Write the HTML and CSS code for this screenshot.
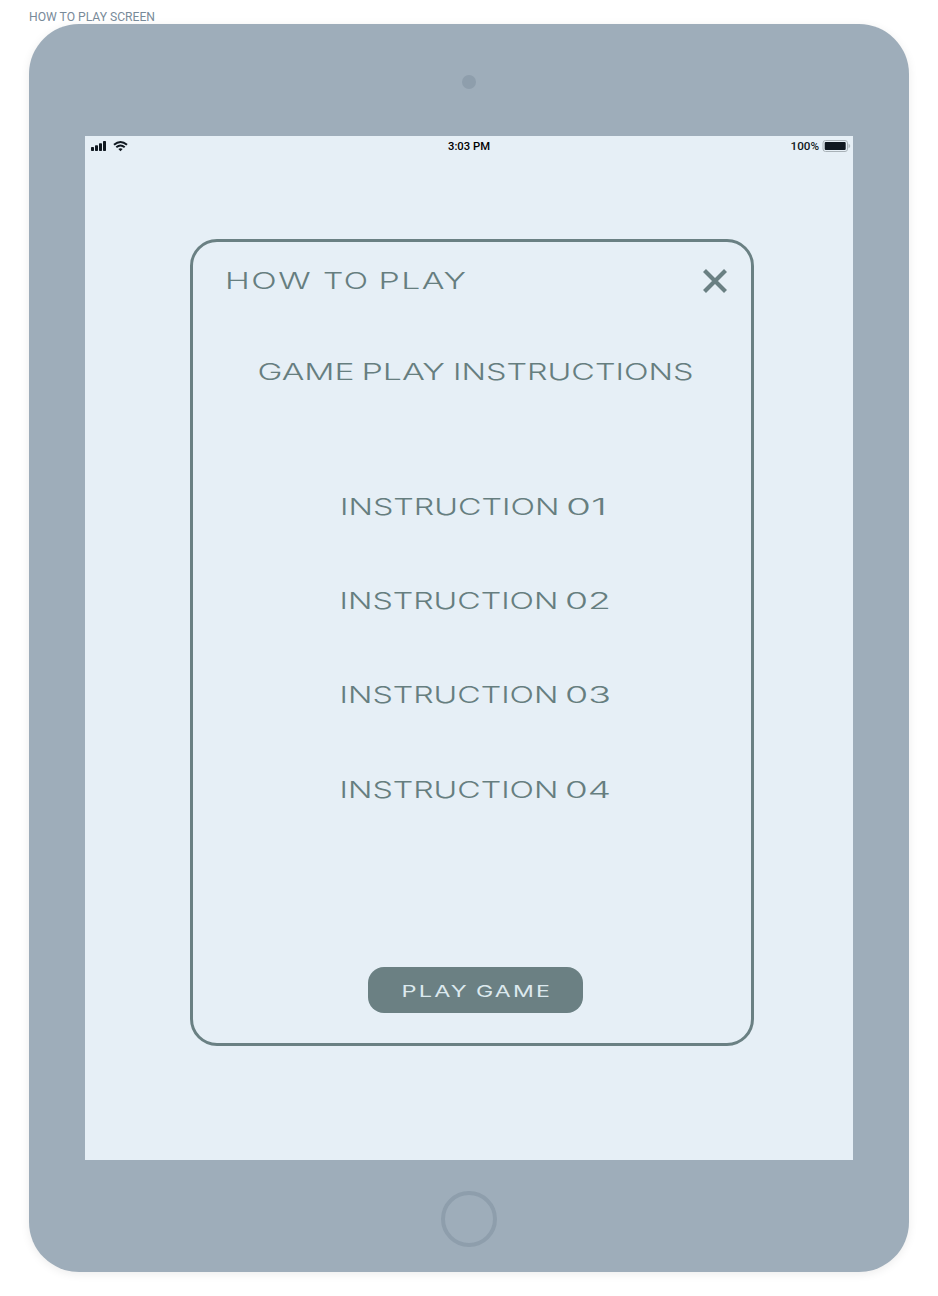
FILE: index.html
```html
<!DOCTYPE html>
<html lang="en">
<head>
<meta charset="utf-8">
<title>How to Play Screen</title>
<link rel="stylesheet" href="styles.css">
</head>
<body>
<svg class="caption" viewBox="0 0 140 24"><text x="0" y="21" textLength="126" lengthAdjust="spacingAndGlyphs">HOW TO PLAY SCREEN</text></svg>
<main class="tablet">
  <div class="camera"></div>
  <section class="screen">
    <header class="status">
      <svg class="signals" viewBox="0 0 50 20">
        <rect x="6" y="11" width="3" height="4" rx=".7"/><rect x="10" y="9.3" width="3" height="5.7" rx=".7"/><rect x="14" y="7.3" width="3" height="7.7" rx=".7"/><rect x="18" y="5" width="3" height="10" rx=".7"/>
        <path class="wave" d="M29 8.8Q35.5 3.2 42 8.8M31.3 11.3Q35.5 7.7 39.7 11.3"/>
        <path d="M33.4 13.1Q35.5 11.5 37.6 13.1L35.5 15.3Z"/>
      </svg>
      <svg class="clock" viewBox="0 0 50 20"><text x="4" y="14.2" textLength="42" lengthAdjust="spacingAndGlyphs">3:03 PM</text></svg>
      <svg class="power" viewBox="0 0 70 20">
        <text x="7.5" y="14.2" textLength="28.5" lengthAdjust="spacingAndGlyphs">100%</text>
        <rect class="shell" x="40" y="4.5" width="24.5" height="11" rx="2.5"/>
        <rect x="41.7" y="6" width="21" height="8" rx="1"/>
        <path class="tip" d="M65.500 7.500Q69 10 65.500 12.500Z"/>
      </svg>
    </header>
    <article class="card">
      <div class="head">
        <svg class="title" viewBox="0 0 300 40">
          <text x="32" y="26.7" textLength="87" lengthAdjust="spacingAndGlyphs">HOW</text>
          <text x="130" y="26.7" textLength="46.5" lengthAdjust="spacingAndGlyphs">TO</text>
          <text x="185.500" y="26.7" textLength="89" lengthAdjust="spacingAndGlyphs">PLAY</text>
        </svg>
        <svg class="close" viewBox="0 0 30 30"><path d="M4.500 4.500L25.500 25.500M25.500 4.500L4.500 25.500"/></svg>
      </div>
      <svg class="line intro" viewBox="0 0 558 40">
        <text x="64.500" y="28" textLength="97" lengthAdjust="spacingAndGlyphs">GAME</text>
        <text x="168.500" y="28" textLength="83.500" lengthAdjust="spacingAndGlyphs">PLAY</text>
        <text x="260" y="28" textLength="240.500" lengthAdjust="spacingAndGlyphs">INSTRUCTIONS</text>
      </svg>
      <div class="steps">
        <svg class="line" viewBox="0 0 558 40"><text x="147" y="27.9" textLength="219.500" lengthAdjust="spacingAndGlyphs">INSTRUCTION</text><text x="373" y="27.9" textLength="41" lengthAdjust="spacingAndGlyphs">01</text></svg>
        <svg class="line" viewBox="0 0 558 40"><text x="146.500" y="27.9" textLength="219" lengthAdjust="spacingAndGlyphs">INSTRUCTION</text><text x="372" y="27.9" textLength="46" lengthAdjust="spacingAndGlyphs">02</text></svg>
        <svg class="line" viewBox="0 0 558 40"><text x="146.500" y="27.9" textLength="219" lengthAdjust="spacingAndGlyphs">INSTRUCTION</text><text x="372" y="27.9" textLength="46" lengthAdjust="spacingAndGlyphs">03</text></svg>
        <svg class="line" viewBox="0 0 558 40"><text x="146.500" y="28.3" textLength="219" lengthAdjust="spacingAndGlyphs">INSTRUCTION</text><text x="372" y="28.3" textLength="46" lengthAdjust="spacingAndGlyphs">04</text></svg>
      </div>
      <button class="play"><svg viewBox="0 0 215 46">
        <text x="33.500" y="30.200" textLength="67.500" lengthAdjust="spacingAndGlyphs">PLAY</text>
        <text x="108" y="30.200" textLength="76" lengthAdjust="spacingAndGlyphs">GAME</text>
      </svg></button>
    </article>
  </section>
  <div class="home"></div>
</main>
</body>
</html>
```
FILE: styles.css
```css
* { box-sizing: border-box; }
body { margin: 0; background: #fff; height: 1296px; overflow: hidden; }
svg { display: block; }
.caption { width: 140px; height: 24px; margin-left: 29px; fill: #788a99; font: 400 12.3px Roboto, sans-serif; }
.tablet { width: 880px; height: 1248px; margin-left: 29px; border-radius: 50px; background: #9eadba; box-shadow: 0 2px 10px rgba(0, 0, 0, .08); display: flex; flex-direction: column; align-items: center; }
.camera { width: 14px; height: 14px; margin: 51px 0 47px; border-radius: 50%; background: #8e9eac; }
.screen { width: 768px; height: 1024px; background: #e6eff6; display: flex; flex-direction: column; }
.status { display: grid; grid-template-columns: 1fr 50px 1fr; height: 20px; fill: #101820; font: 500 11.5px Roboto, sans-serif; }
.signals { width: 50px; height: 20px; }
.wave { fill: none; stroke: #101820; stroke-width: 2; }
.clock { width: 50px; height: 20px; fill: #000; }
.power { width: 70px; height: 20px; justify-self: end; }
.shell { fill: none; stroke: #a9b2b8; }
.tip { fill: #b2bbc0; }
.card { width: 564px; height: 807px; margin: 83px 0 0 105px; border: 3px solid #6a8083; border-radius: 27px; display: flex; flex-direction: column; }
.card svg { font-family: Inter, sans-serif; font-size: 22.4px; font-weight: 300; fill: #667e7f; }
.head { display: flex; justify-content: space-between; padding: 20px 21px 0 0; height: 60px; }
.title { width: 300px; height: 40px; letter-spacing: 1px; }
.close { width: 30px; height: 30px; margin-top: 4px; }
.close path { stroke: #6a8083; stroke-width: 4.2; stroke-linecap: butt; }
.line { width: 558px; height: 40px; flex: none; }
.intro { margin-top: 50px; }
.steps { display: flex; flex-direction: column; gap: 54.200px; margin-top: 95px; }
.play { width: 215px; height: 46px; margin: 157px 0 0 175px; padding: 0; border: 0; border-radius: 16px; background: #6b8083; flex: none; }
.card .play svg { width: 215px; height: 46px; font-size: 16px; font-weight: 400; letter-spacing: 1.5px; fill: #dce9ee; }
.home { width: 56px; height: 56px; margin-top: 31px; border: 4px solid #8e9eac; border-radius: 50%; }
```
